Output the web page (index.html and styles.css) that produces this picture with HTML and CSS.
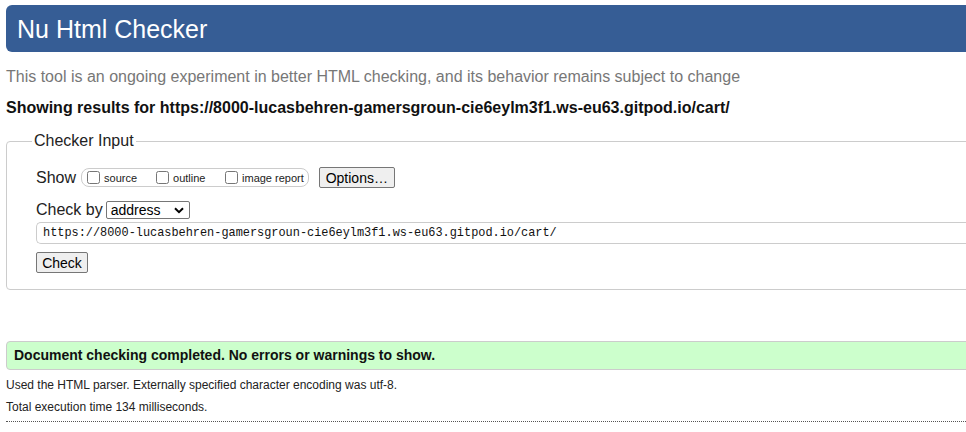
FILE: index.html
```html
<!DOCTYPE html>
<html lang="en">
<head>
<meta charset="utf-8">
<title>Nu Html Checker</title>
<link rel="stylesheet" href="styles.css">
</head>
<body>
<div class="wrap">
  <h1 class="title">Nu Html Checker</h1>
  <p class="intro">This tool is an ongoing experiment in better HTML checking, and its behavior remains subject to change</p>
  <p class="showing">Showing results for https://8000-lucasbehren-gamersgroun-cie6eylm3f1.ws-eu63.gitpod.io/cart/</p>
  <fieldset class="input-box">
    <legend class="legend">Checker Input</legend>
    <div class="row show-row">
      <span class="label">Show</span>
      <span class="opts">
        <label class="opt"><input type="checkbox" class="cb"><span>source</span></label>
        <label class="opt"><input type="checkbox" class="cb"><span>outline</span></label>
        <label class="opt"><input type="checkbox" class="cb"><span>image report</span></label>
      </span>
      <button class="btn btn-options" type="button">Options…</button>
    </div>
    <div class="row by-row">
      <span class="label">Check by</span>
      <span class="select">address<svg class="chev" width="10" height="7" viewBox="0 0 10 7"><path d="M1 1.2 L5 5.2 L9 1.2" fill="none" stroke="#000" stroke-width="2"/></svg></span>
    </div>
    <div class="url">https://8000-lucasbehren-gamersgroun-cie6eylm3f1.ws-eu63.gitpod.io/cart/</div>
    <button class="btn btn-check" type="button">Check</button>
  </fieldset>
  <div class="success">Document checking completed. No errors or warnings to show.</div>
  <p class="info">Used the HTML parser. Externally specified character encoding was utf-8.</p>
  <p class="info">Total execution time 134 milliseconds.</p>
  <hr class="dots">
</div>
</body>
</html>
```

FILE: styles.css
```css
html, body {
  overflow: hidden;
}
body {
  margin: 0;
  padding: 5px 0 0 6px;
  background: #fff;
  font-family: "Liberation Sans", Arial, sans-serif;
  color: #000;
}
.wrap {
  width: 964px;
}
.title {
  margin: 0;
  height: 47px;
  line-height: 48px;
  padding-left: 11px;
  background: #365d95;
  color: #fff;
  font-size: 25px;
  font-weight: normal;
  border-radius: 6px 0 0 6px;
}
.intro {
  margin: 15px 0 0;
  line-height: 20px;
  font-size: 16px;
  color: #777;
}
.showing {
  margin: 11px 0 0;
  line-height: 20px;
  font-size: 16px;
  font-weight: bold;
  color: #111;
}
.input-box {
  margin: 14px 0 0;
  padding: 16px 0 16px 29px;
  border: 1px solid #ccc;
  border-radius: 4px 0 0 4px;
  min-width: 0;
}
.legend {
  margin-left: -4px;
  padding: 0 2px;
  font-size: 16px;
  line-height: 18px;
  color: #222;
}
.row {
  display: flex;
  align-items: center;
}
.label {
  font-size: 16px;
  color: #222;
}
.show-row {
  height: 23px;
}
.opts {
  display: flex;
  align-items: center;
  height: 17px;
  margin-left: 5px;
  padding: 0 4px 0 5px;
  border: 1px solid #ccc;
  border-radius: 8px;
  white-space: nowrap;
}
.opt {
  display: flex;
  align-items: center;
  font-size: 11px;
  color: #222;
  white-space: nowrap;
}
.opt:nth-child(1) { width: 69px; }
.opt:nth-child(2) { width: 69px; }
.cb {
  margin: 0 4px 0 0;
  width: 13px;
  height: 13px;
}
.btn {
  font-family: "Liberation Sans", Arial, sans-serif;
  font-size: 14px;
  color: #000;
  background: #efefef;
  border: 1px solid #767676;
  border-radius: 2px;
  padding: 0;
  height: 21px;
}
.btn-options {
  margin-left: 10px;
  width: 76px;
}
.by-row {
  margin-top: 10px;
  height: 22px;
}
.select {
  display: flex;
  align-items: center;
  justify-content: space-between;
  box-sizing: border-box;
  margin-left: 3px;
  width: 84px;
  height: 18px;
  padding: 0 5px 0 4px;
  border: 1px solid #767676;
  border-radius: 2px;
  font-size: 14px;
  color: #000;
}
.chev {
  display: block;
}
.url {
  box-sizing: border-box;
  margin-top: 1px;
  height: 22px;
  line-height: 20px;
  padding-left: 6px;
  border: 1px solid #ccc;
  border-right: 0;
  border-radius: 5px 0 0 5px;
  font-family: "Liberation Mono", "DejaVu Sans Mono", monospace;
  font-size: 11.9px;
  color: #111;
}
.btn-check {
  display: block;
  margin-top: 8px;
  width: 52px;
}
.success {
  box-sizing: border-box;
  margin-top: 51px;
  height: 29px;
  line-height: 27px;
  padding-left: 7px;
  background: #ccffcc;
  border: 1px solid #ccc;
  border-radius: 4px 0 0 4px;
  font-size: 14px;
  font-weight: bold;
  color: #111;
}
.info {
  margin: 7px 0 0;
  line-height: 16px;
  font-size: 12px;
  color: #222;
}
.info + .info {
  margin-top: 6px;
}
.dots {
  margin: 6px 0 0;
  border: 0;
  border-top: 1px dotted #555;
  height: 0;
}
```
